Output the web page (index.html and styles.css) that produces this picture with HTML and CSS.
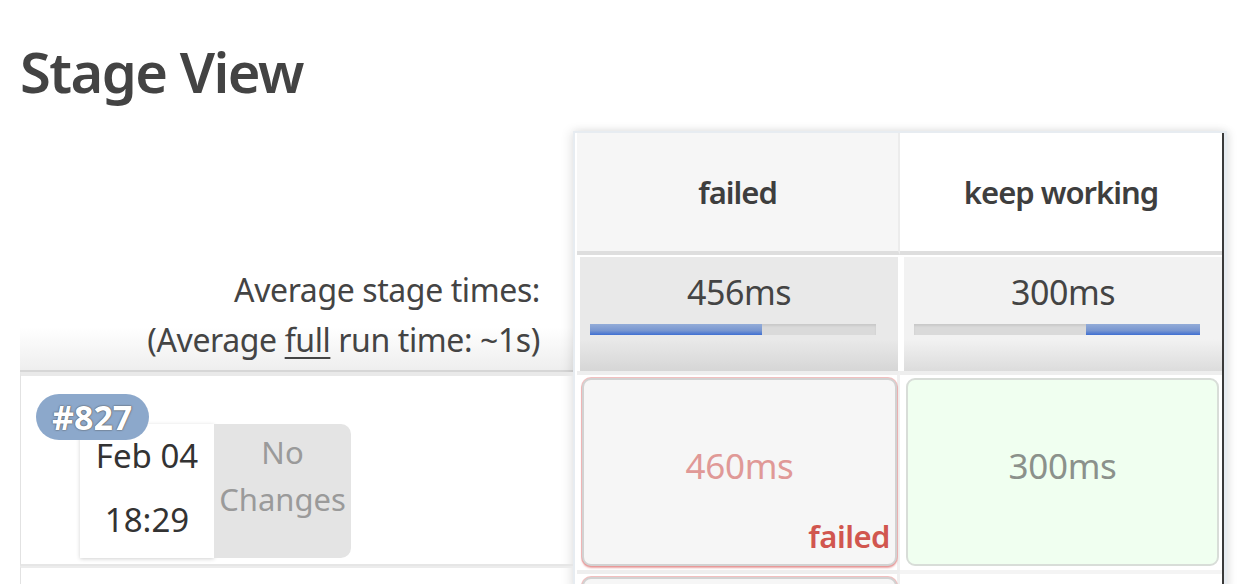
FILE: index.html
```html
<!DOCTYPE html>
<html>
<head>
<meta charset="utf-8">
<link rel="stylesheet" href="styles.css">
</head>
<body>
<h2 class="title">Stage View</h2>
<div class="stage-view">
  <div class="left-col">
    <div class="left-head"></div>
    <div class="avg-label">
      <div>Average stage times:</div>
      <div>(Average <u>full</u> run time: ~1s)</div>
    </div>
    <div class="build-row">
      <div class="badge">#827</div>
      <div class="build-info">
        <div class="date-box">
          <div>Feb 04</div>
          <div>18:29</div>
        </div>
        <div class="changes-box">No Changes</div>
      </div>
    </div>
    <div class="build-row next"></div>
  </div>
  <div class="table">
    <div class="grid">
      <div class="head odd">failed</div>
      <div class="head even">keep working</div>
      <div class="avg odd">
        <div class="avg-time">456ms</div>
        <div class="bar"><div class="fill" style="width:60%"></div></div>
      </div>
      <div class="avg even">
        <div class="avg-time">300ms</div>
        <div class="bar"><div class="fill right" style="width:40%"></div></div>
      </div>
      <div class="cell-wrap odd">
        <div class="stage failed">
          <div class="dur">460ms</div>
          <div class="status">failed</div>
        </div>
      </div>
      <div class="cell-wrap even">
        <div class="stage success">
          <div class="dur">300ms</div>
        </div>
      </div>
      <div class="cell-wrap odd last">
        <div class="stage failed"></div>
      </div>
      <div class="cell-wrap even last"></div>
    </div>
  </div>
</div>
</body>
</html>
```

FILE: styles.css
```css
html, body {
  margin: 0;
  padding: 0;
  background: #fff;
  overflow: hidden;
}
body {
  font-family: "Noto Sans", "DejaVu Sans Condensed", sans-serif;
  color: #444;
  padding-left: 20px;
  width: 1236px;
  height: 584px;
}
.title {
  margin: 43px 0 0;
  font-size: 56px;
  line-height: 56px;
  letter-spacing: -1.5px;
  font-weight: 600;
  color: #434343;
  height: 88px;
}
.stage-view {
  display: flex;
  align-items: flex-start;
}
.left-col {
  width: 553px;
  flex: none;
}
.left-head {
  height: 127px;
}
.avg-label {
  height: 114px;
  box-sizing: border-box;
  padding: 7px 33px 0 0;
  text-align: right;
  font-size: 32px;
  letter-spacing: -0.4px;
  line-height: 50px;
  color: #444;
  background: linear-gradient(to bottom, #fff 0%, #fff 62%, #eeeeee 100%);
  border-bottom: 2px solid #d6d6d6;
}
.avg-label u {
  text-decoration-thickness: 2px;
  text-underline-offset: 5px;
}
.build-row {
  position: relative;
  height: 194px;
  box-sizing: border-box;
  border-top: 4px solid #e9e9e9;
  border-left: 1px solid #e2e2e2;
  border-bottom: 2px solid #e6e6e6;
}
.build-row.next {
  height: 40px;
  border-bottom: none;
  border-top: 2px solid #ececec;
}
.badge {
  position: absolute;
  left: 15px;
  top: 18px;
  z-index: 2;
  height: 46px;
  padding: 0 17px 0 16px;
  border-radius: 23px;
  background: #8ca8cb;
  color: #fff;
  font-weight: bold;
  font-size: 34px;
  line-height: 46px;
  text-shadow: 0 0 2px #555, 0 0 1px #555;
}
.build-info {
  display: flex;
  margin: 48px 0 0 59px;
}
.date-box {
  width: 134px;
  height: 134px;
  box-sizing: border-box;
  background: #fff;
  box-shadow: 0 1px 4px rgba(0, 0, 0, 0.18);
  display: flex;
  flex-direction: column;
  justify-content: space-between;
  align-items: center;
  padding: 10px 0 16px;
  font-size: 33px;
  line-height: 44px;
  color: #333;
}
.changes-box {
  width: 137px;
  height: 134px;
  box-sizing: border-box;
  background: #e4e4e4;
  border-radius: 0 10px 10px 0;
  color: #9a9a9a;
  font-size: 31px;
  line-height: 47px;
  text-align: center;
  padding-top: 5px;
}
.table {
  flex: none;
  width: 654px;
  box-sizing: border-box;
  border: 2px solid #e7ecf1;
  border-right-width: 3px;
  box-shadow: -3px 0 10px rgba(0, 0, 0, 0.09), 3px 0 8px rgba(0, 0, 0, 0.08);
  background: #fff;
  height: 460px;
  overflow: hidden;
}
.grid {
  display: grid;
  grid-template-columns: 323px 322px;
  grid-template-rows: 122px 116px 199px 60px;
  border-right: 2px solid #3a3a3a;
  margin-left: 2px;
}
.head {
  display: flex;
  align-items: center;
  justify-content: center;
  font-weight: 600;
  font-size: 31px;
  letter-spacing: -1px;
  color: #3e3e3e;
  border-bottom: 4px solid #dedede;
}
.head.odd {
  background: #f6f6f6;
  border-right: 2px solid #ececec;
}
.head.even {
  background: #fff;
}
.avg {
  margin-top: 2px;
  height: 114px;
  box-sizing: border-box;
  padding-top: 13px;
  position: relative;
}
.avg.odd {
  margin-left: 3px;
  margin-right: 2px;
  background: linear-gradient(to bottom, #e9e9e9 0%, #e9e9e9 72%, #d6d6d6 100%);
}
.avg.even {
  margin-left: 4px;
  background: linear-gradient(to bottom, #f2f2f2 0%, #f2f2f2 72%, #dcdcdc 100%);
}
.avg-time {
  text-align: center;
  font-size: 34px;
  letter-spacing: -0.5px;
  line-height: 44px;
  color: #444;
}
.bar {
  margin: 10px 0 0 10px;
  width: 286px;
  height: 11px;
  background: #dadada;
  box-shadow: inset 0 2px 2px rgba(0, 0, 0, 0.08);
  position: relative;
}
.fill {
  height: 11px;
  background: linear-gradient(to bottom, #93acd8 0%, #7896d0 60%, #3f6fd2 100%);
}
.fill.right {
  margin-left: auto;
}
.cell-wrap {
  padding: 3px 3px 0 5px;
  border-top: 4px solid #eeeeee;
}
.cell-wrap.odd {
  border-right: 3px solid #f0f0f0;
  padding-right: 0;
}
.cell-wrap.even {
  padding-left: 6px;
  padding-right: 3px;
}
.cell-wrap.even.last {
  border-top-color: #f4f4f4;
}
.stage {
  height: 188px;
  box-sizing: border-box;
  border: 2px solid #d2d2d2;
  border-radius: 9px;
  position: relative;
}
.stage.failed {
  background: #f6f6f6;
  box-shadow: 0 0 0 1px rgba(232, 140, 140, 0.55), 0 2px 2px rgba(214, 90, 90, 0.55);
}
.stage.success {
  background: #f0fff0;
  border-color: #d8ddd8;
}
.dur {
  text-align: center;
  font-size: 35px;
  letter-spacing: -0.3px;
  line-height: 44px;
  padding-top: 64px;
}
.stage.failed .dur {
  color: #e09997;
}
.stage.success .dur {
  color: #8b918b;
}
.status {
  position: absolute;
  right: 5px;
  bottom: 12px;
  font-size: 31px;
  letter-spacing: -0.5px;
  line-height: 32px;
  font-weight: 600;
  color: #d1564f;
}
```
